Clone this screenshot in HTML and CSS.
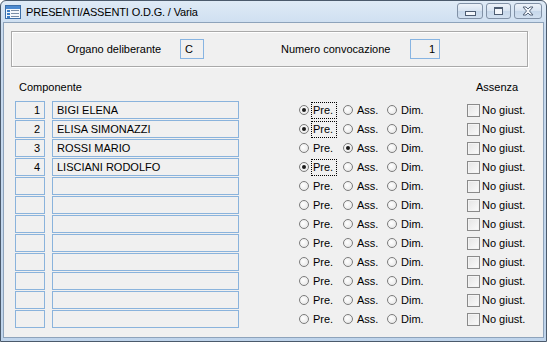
FILE: index.html
```html
<!DOCTYPE html>
<html lang="it">
<head>
    <meta charset="UTF-8">
    <title>PRESENTI/ASSENTI O.D.G. / Varia</title>
    <link rel="stylesheet" href="styles.css">
</head>
<body>
    <div class="window">
        <div class="titlebar">
            <svg class="app-icon" width="16" height="16" viewBox="0 0 16 16">
                <rect x="0.5" y="1.5" width="15" height="13" fill="#f4f8fc" stroke="#3d6fa8"/>
                <rect x="1" y="2" width="14" height="3" fill="#4d8ad0"/>
                <rect x="2" y="6" width="3" height="2" fill="#3f7fc6"/>
                <rect x="2" y="9" width="3" height="2" fill="#3f7fc6"/>
                <rect x="2" y="12" width="3" height="2" fill="#3f7fc6"/>
                <rect x="6" y="6" width="8" height="1" fill="#7a8ea6"/>
                <rect x="6" y="9" width="8" height="1" fill="#7a8ea6"/>
                <rect x="6" y="12" width="8" height="1" fill="#7a8ea6"/>
            </svg>
            <span class="title">PRESENTI/ASSENTI O.D.G. / Varia</span>
            <div class="caption-buttons">
                <div class="cap cap-min"><span class="glyph-min"></span></div>
                <div class="cap cap-max"><span class="glyph-max"></span></div>
                <div class="cap cap-close">
                    <svg width="14" height="10" viewBox="0 0 14 10">
                        <path d="M2 1 L5 1 L7 3 L9 1 L12 1 L8.5 5 L12 9 L9 9 L7 7 L5 9 L2 9 L5.5 5 Z" fill="#f4f7fb" stroke="#56657a" stroke-width="1"/>
                    </svg>
                </div>
            </div>
        </div>

        <div class="client">
            <div class="group">
                <span class="glabel glabel-organo">Organo deliberante</span>
                <span class="field field-organo">C</span>
                <span class="glabel glabel-numero">Numero convocazione</span>
                <span class="field field-numero">1</span>
            </div>

            <div class="list-head">
                <span class="head-comp">Componente</span>
                <span class="head-ass">Assenza</span>
            </div>

            <div class="list">
                <div class="row">
                    <span class="cell num">1</span>
                    <span class="cell name">BIGI ELENA</span>
                    <div class="opts">
                        <span class="opt"><span class="radio on"></span><span class="lbl focus">Pre.</span></span>
                        <span class="opt"><span class="radio"></span><span class="lbl">Ass.</span></span>
                        <span class="opt"><span class="radio"></span><span class="lbl">Dim.</span></span>
                    </div>
                    <span class="chk"><span class="box"></span>No giust.</span>
                </div>
                <div class="row">
                    <span class="cell num">2</span>
                    <span class="cell name">ELISA SIMONAZZI</span>
                    <div class="opts">
                        <span class="opt"><span class="radio on"></span><span class="lbl focus">Pre.</span></span>
                        <span class="opt"><span class="radio"></span><span class="lbl">Ass.</span></span>
                        <span class="opt"><span class="radio"></span><span class="lbl">Dim.</span></span>
                    </div>
                    <span class="chk"><span class="box"></span>No giust.</span>
                </div>
                <div class="row">
                    <span class="cell num">3</span>
                    <span class="cell name">ROSSI MARIO</span>
                    <div class="opts">
                        <span class="opt"><span class="radio"></span><span class="lbl">Pre.</span></span>
                        <span class="opt"><span class="radio on"></span><span class="lbl">Ass.</span></span>
                        <span class="opt"><span class="radio"></span><span class="lbl">Dim.</span></span>
                    </div>
                    <span class="chk"><span class="box"></span>No giust.</span>
                </div>
                <div class="row">
                    <span class="cell num">4</span>
                    <span class="cell name">LISCIANI RODOLFO</span>
                    <div class="opts">
                        <span class="opt"><span class="radio on"></span><span class="lbl focus">Pre.</span></span>
                        <span class="opt"><span class="radio"></span><span class="lbl">Ass.</span></span>
                        <span class="opt"><span class="radio"></span><span class="lbl">Dim.</span></span>
                    </div>
                    <span class="chk"><span class="box"></span>No giust.</span>
                </div>
                <div class="row">
                    <span class="cell num"></span>
                    <span class="cell name"></span>
                    <div class="opts">
                        <span class="opt"><span class="radio"></span><span class="lbl">Pre.</span></span>
                        <span class="opt"><span class="radio"></span><span class="lbl">Ass.</span></span>
                        <span class="opt"><span class="radio"></span><span class="lbl">Dim.</span></span>
                    </div>
                    <span class="chk"><span class="box"></span>No giust.</span>
                </div>
                <div class="row">
                    <span class="cell num"></span>
                    <span class="cell name"></span>
                    <div class="opts">
                        <span class="opt"><span class="radio"></span><span class="lbl">Pre.</span></span>
                        <span class="opt"><span class="radio"></span><span class="lbl">Ass.</span></span>
                        <span class="opt"><span class="radio"></span><span class="lbl">Dim.</span></span>
                    </div>
                    <span class="chk"><span class="box"></span>No giust.</span>
                </div>
                <div class="row">
                    <span class="cell num"></span>
                    <span class="cell name"></span>
                    <div class="opts">
                        <span class="opt"><span class="radio"></span><span class="lbl">Pre.</span></span>
                        <span class="opt"><span class="radio"></span><span class="lbl">Ass.</span></span>
                        <span class="opt"><span class="radio"></span><span class="lbl">Dim.</span></span>
                    </div>
                    <span class="chk"><span class="box"></span>No giust.</span>
                </div>
                <div class="row">
                    <span class="cell num"></span>
                    <span class="cell name"></span>
                    <div class="opts">
                        <span class="opt"><span class="radio"></span><span class="lbl">Pre.</span></span>
                        <span class="opt"><span class="radio"></span><span class="lbl">Ass.</span></span>
                        <span class="opt"><span class="radio"></span><span class="lbl">Dim.</span></span>
                    </div>
                    <span class="chk"><span class="box"></span>No giust.</span>
                </div>
                <div class="row">
                    <span class="cell num"></span>
                    <span class="cell name"></span>
                    <div class="opts">
                        <span class="opt"><span class="radio"></span><span class="lbl">Pre.</span></span>
                        <span class="opt"><span class="radio"></span><span class="lbl">Ass.</span></span>
                        <span class="opt"><span class="radio"></span><span class="lbl">Dim.</span></span>
                    </div>
                    <span class="chk"><span class="box"></span>No giust.</span>
                </div>
                <div class="row">
                    <span class="cell num"></span>
                    <span class="cell name"></span>
                    <div class="opts">
                        <span class="opt"><span class="radio"></span><span class="lbl">Pre.</span></span>
                        <span class="opt"><span class="radio"></span><span class="lbl">Ass.</span></span>
                        <span class="opt"><span class="radio"></span><span class="lbl">Dim.</span></span>
                    </div>
                    <span class="chk"><span class="box"></span>No giust.</span>
                </div>
                <div class="row">
                    <span class="cell num"></span>
                    <span class="cell name"></span>
                    <div class="opts">
                        <span class="opt"><span class="radio"></span><span class="lbl">Pre.</span></span>
                        <span class="opt"><span class="radio"></span><span class="lbl">Ass.</span></span>
                        <span class="opt"><span class="radio"></span><span class="lbl">Dim.</span></span>
                    </div>
                    <span class="chk"><span class="box"></span>No giust.</span>
                </div>
                <div class="row">
                    <span class="cell num"></span>
                    <span class="cell name"></span>
                    <div class="opts">
                        <span class="opt"><span class="radio"></span><span class="lbl">Pre.</span></span>
                        <span class="opt"><span class="radio"></span><span class="lbl">Ass.</span></span>
                        <span class="opt"><span class="radio"></span><span class="lbl">Dim.</span></span>
                    </div>
                    <span class="chk"><span class="box"></span>No giust.</span>
                </div>
            </div>
        </div>
    </div>
</body>
</html>
```

FILE: styles.css
```css
body {
    margin: 0;
    font-family: 'Liberation Sans', Arial, sans-serif;
    font-size: 11px;
    color: #000;
    background: #fff;
}
.window {
    width: 547px;
    height: 342px;
    box-sizing: border-box;
    border: 1px solid #4b5a6c;
    border-radius: 6px 6px 0 0;
    background: linear-gradient(#dfeaf6, #c9dbef 30px, #bfd4eb);
    padding: 0 2px 3px 2px;
    display: flex;
    flex-direction: column;
}
.titlebar {
    height: 21px;
    display: flex;
    align-items: center;
}
.app-icon {
    margin-left: 2px;
    margin-right: 5px;
    flex: none;
}
.title {
    font-family: 'Liberation Sans', Arial, sans-serif;
    font-size: 11px;
    letter-spacing: -0.15px;
    color: #000;
}
.caption-buttons {
    margin-left: auto;
    margin-right: 2px;
    align-self: flex-start;
    margin-top: 2px;
    display: flex;
    gap: 3px;
}
.cap {
    height: 16px;
    box-sizing: border-box;
    border: 1px solid #8191a6;
    border-radius: 3px;
    background: linear-gradient(#edf2f9, #d7e3f1 50%, #c6d7ea 51%, #d2e0f0);
    display: flex;
    align-items: center;
    justify-content: center;
}
.cap-min { width: 26px; }
.cap-max { width: 25px; }
.cap-close { width: 28px; }
.glyph-min {
    width: 9px;
    height: 3px;
    margin-top: 5px;
    border: 1px solid #4e5d72;
    background: #f4f7fb;
}
.glyph-max {
    width: 7px;
    height: 5px;
    border: 1px solid #4e5d72;
    border-top-width: 2px;
    background: #f4f7fb;
}
.client {
    flex: 1;
    background: #f0f0f0;
    border: 1px solid #8ea3bb;
}
.group {
    margin: 8px 15px 0 7px;
    height: 36px;
    box-sizing: border-box;
    border: 1px solid #a9a9a9;
    box-shadow: inset 1px 1px 0 #fff, 1px 1px 0 #fff;
    display: flex;
    align-items: center;
    padding-left: 55px;
}
.glabel-organo { width: 113px; }
.glabel-numero {
    width: 129px;
    margin-left: 77px;
}
.field {
    height: 20px;
    box-sizing: border-box;
    border: 1px solid #87b4e2;
    line-height: 18px;
    padding: 0 4px;
}
.field-organo { width: 24px; }
.field-numero {
    width: 30px;
    text-align: right;
}
.list-head {
    margin-top: 14px;
    height: 13px;
    line-height: 13px;
    display: flex;
}
.head-comp { margin-left: 15px; }
.head-ass { margin-left: 394px; }
.list {
    margin-top: 7px;
    margin-left: 11px;
}
.row {
    display: flex;
    align-items: center;
    height: 18px;
    margin-bottom: 1px;
}
.cell {
    height: 18px;
    box-sizing: border-box;
    border: 1px solid #8ab3dc;
    line-height: 16px;
    padding: 0 4px;
}
.num {
    width: 30px;
    text-align: right;
}
.name {
    width: 187px;
    margin-left: 7px;
}
.opts {
    display: flex;
    margin-left: 60px;
}
.opt {
    width: 44px;
    display: flex;
    align-items: center;
}
.radio {
    width: 10px;
    height: 10px;
    box-sizing: border-box;
    border: 1px solid #7c7c7c;
    border-radius: 50%;
    background: radial-gradient(circle at 40% 40%, #fff, #e2e2e2);
    margin-right: 2px;
    position: relative;
}
.radio.on::after {
    content: "";
    position: absolute;
    left: 2px;
    top: 2px;
    width: 4px;
    height: 4px;
    border-radius: 50%;
    background: #1a1a1a;
}
.lbl {
    border: 1px dotted transparent;
    padding: 1px 1px;
    line-height: 13px;
}
.lbl.focus {
    border-color: #000;
    padding-right: 3px;
    margin-right: -2px;
}
.chk {
    margin-left: 36px;
    display: flex;
    align-items: center;
}
.box {
    width: 13px;
    height: 13px;
    box-sizing: border-box;
    border: 1px solid #8a8a8a;
    background: linear-gradient(135deg, #e4e4e4, #fbfbfb);
    box-shadow: inset 0 0 0 1px #f3f3f3;
    margin-right: 2px;
}
```
